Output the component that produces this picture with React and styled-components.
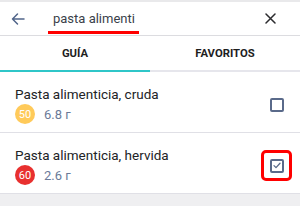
import React from "react";
import styled, { createGlobalStyle } from "styled-components";

const GlobalStyle = createGlobalStyle`
    html, body {
        margin: 0;
        padding: 0;
        background: #ffffff;
        font-family: Roboto, "Noto Sans", Arial, sans-serif;
    }
`;

const Screen = styled.div`
    width: 300px;
    height: 206px;
    overflow: hidden;
    display: flex;
    flex-direction: column;
    background: #efeff1;
`;

const TopStrip = styled.div`
    height: 2px;
    background: #e9e9eb;
`;

const Header = styled.div`
    height: 33px;
    display: flex;
    align-items: center;
    background: #ffffff;
    border-bottom: 1px solid #dcdce0;
    padding: 0 24px 0 11px;
`;

const IconButton = styled.div`
    display: flex;
    align-items: center;
    justify-content: center;
    width: ${(p) => p.size}px;
    height: ${(p) => p.size}px;
`;

const SearchText = styled.span`
    position: relative;
    margin-left: 28px;
    flex: 1;
    font-size: 13px;
    color: #3a3f4a;
    line-height: 20px;

    &::after {
        content: "";
        position: absolute;
        left: -5px;
        width: 91px;
        bottom: -5px;
        height: 3px;
        background: #ff0000;
    }
`;

const Tabs = styled.div`
    display: flex;
    background: #ffffff;
`;

const Tab = styled.div`
    flex: 1;
    height: 34px;
    display: flex;
    align-items: center;
    justify-content: center;
    font-size: 11.3px;
    font-weight: 700;
    color: #1e1e1e;
    border-bottom: 2px solid ${(p) => (p.active ? "#2fc6c8" : "#e6e6ec")};
`;

const Item = styled.div`
    display: flex;
    align-items: flex-start;
    height: 60px;
    background: #ffffff;
    border-bottom: 1px solid #e0e0e6;
    padding: 0 8px 0 15px;
`;

const Info = styled.div`
    flex: 1;
    padding-top: 12px;
`;

const Title = styled.div`
    font-size: 13.5px;
    line-height: 20px;
    color: #222326;
`;

const SubRow = styled.div`
    display: flex;
    align-items: center;
    gap: 9px;
    margin-top: 0;
`;

const Badge = styled.span`
    width: 20px;
    height: 20px;
    border-radius: 50%;
    background: ${(p) => p.color};
    color: #ffffff;
    font-size: 11px;
    display: flex;
    align-items: center;
    justify-content: center;
`;

const Amount = styled.span`
    font-size: 13px;
    color: #6a7a98;
`;

const CheckCell = styled.div`
    box-sizing: border-box;
    width: 31px;
    height: 31px;
    margin-top: 17px;
    border: 3px solid ${(p) => (p.highlight ? "#ff0000" : "transparent")};
    border-radius: 5px;
    display: flex;
    align-items: center;
    justify-content: center;
`;

const Box = styled.div`
    box-sizing: border-box;
    width: 14px;
    height: 14px;
    border: 2px solid #5a6a8a;
    border-radius: 2px;
    display: flex;
    align-items: center;
    justify-content: center;
`;

const ArrowIcon = () => (
    <svg width="14" height="14" viewBox="0 0 14 14" fill="none">
        <path d="M13 7H1.5M6.5 2L1.5 7l5 5" stroke="#51658a" strokeWidth="1.5" strokeLinecap="round" strokeLinejoin="round" />
    </svg>
);

const CloseIcon = () => (
    <svg width="11" height="11" viewBox="0 0 11 11" fill="none">
        <path d="M1 1l9 9M10 1l-9 9" stroke="#2b2b2e" strokeWidth="1.5" strokeLinecap="round" />
    </svg>
);

const CheckMark = () => (
    <svg width="8" height="7" viewBox="0 0 8 7" fill="none">
        <path d="M1 3.6l2 2L7 1.2" stroke="#5a6a8a" strokeWidth="1.3" strokeLinecap="round" strokeLinejoin="round" />
    </svg>
);

const items = [
    { name: "Pasta alimenticia, cruda", gi: 50, color: "#ffca5a", amount: "6.8 г", checked: false },
    { name: "Pasta alimenticia, hervida", gi: 60, color: "#e8302f", amount: "2.6 г", checked: true },
];

const App = () => {
    return (
        <Screen>
            <GlobalStyle />
            <TopStrip />
            <Header>
                <IconButton size={14}>
                    <ArrowIcon />
                </IconButton>
                <SearchText>pasta alimenti</SearchText>
                <IconButton size={11}>
                    <CloseIcon />
                </IconButton>
            </Header>
            <Tabs>
                <Tab active>GUÍA</Tab>
                <Tab>FAVORITOS</Tab>
            </Tabs>
            {items.map((item) => (
                <Item key={item.name}>
                    <Info>
                        <Title>{item.name}</Title>
                        <SubRow>
                            <Badge color={item.color}>{item.gi}</Badge>
                            <Amount>{item.amount}</Amount>
                        </SubRow>
                    </Info>
                    <CheckCell highlight={item.checked}>
                        <Box>{item.checked && <CheckMark />}</Box>
                    </CheckCell>
                </Item>
            ))}
        </Screen>
    );
};

export default App;
